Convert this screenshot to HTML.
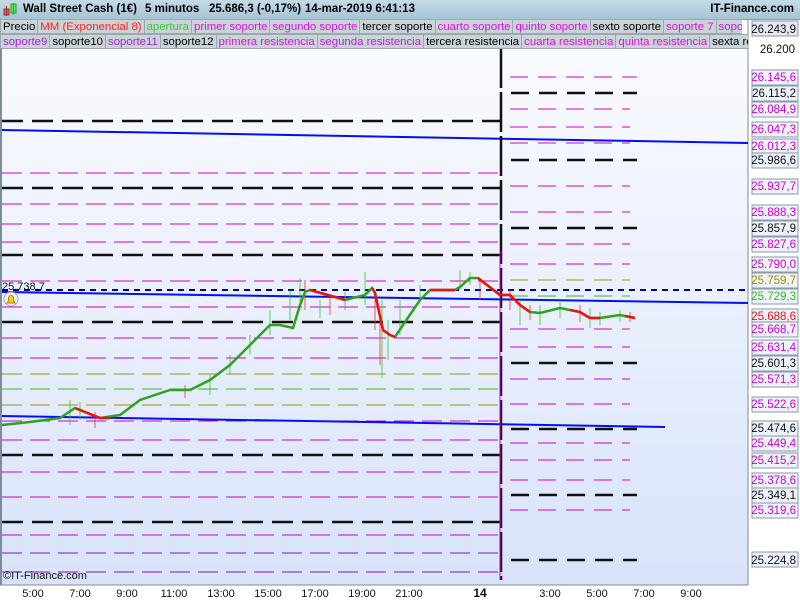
<!DOCTYPE html>
<html><head><meta charset="utf-8"><style>
body{margin:0;width:800px;height:600px;overflow:hidden;background:#fff;font-family:"Liberation Sans",sans-serif;}
.hdr{position:absolute;left:0;top:0;width:800px;height:19px;background:linear-gradient(#c4dbe6,#a5c4d4);border-bottom:1px solid #7f9aa8;font-weight:bold;font-size:11.5px;line-height:19px;}
.hdr span{position:absolute;white-space:nowrap}
.row{position:absolute;left:0;height:15px;font-size:11.4px;line-height:14px;white-space:nowrap;overflow:hidden;width:748px;z-index:2;}
.row span{display:inline-block;background:#c9d3d8;border:1px solid #9aa8b0;padding:0 2px;margin-right:-1px;height:13px;}
</style></head><body>
<div class="hdr"><span style="left:3px;top:3px;width:14px;height:14px">
<svg width="14" height="14"><rect x="1" y="6" width="5" height="6" fill="#e55" stroke="#933"/><rect x="8" y="1" width="5" height="9" fill="#5e5" stroke="#393"/><line x1="3.5" y1="3" x2="3.5" y2="13" stroke="#933"/><line x1="10.5" y1="0" x2="10.5" y2="12" stroke="#393"/></svg></span>
<span style="left:23px">Wall Street Cash (1€)</span><span style="left:145px">5 minutos</span><span style="left:209px">25.686,3 (-0,17%)</span><span style="left:305px">14-mar-2019 6:41:13</span>
<span style="right:6px">IT-Finance.com</span></div>
<div class="row" style="top:19px;width:742px"><span>Precio</span><span style="color:#f22">MM (Exponencial 8)</span><span style="color:#3c3">apertura</span><span style="color:#d1d">primer soporte</span><span style="color:#d1d">segundo soporte</span><span>tercer soporte</span><span style="color:#d1d">cuarto soporte</span><span style="color:#d1d">quinto soporte</span><span>sexto soporte</span><span style="color:#d1d">soporte 7</span><span style="color:#b2d">soporte 8</span></div>
<div class="row" style="top:34px"><span style="color:#a2d">soporte9</span><span>soporte10</span><span style="color:#a2d">soporte11</span><span>soporte12</span><span style="color:#d1d">primera resistencia</span><span style="color:#b2d">segunda resistencia</span><span>tercera resistencia</span><span style="color:#d1d">cuarta resistencia</span><span style="color:#d1d">quinta resistencia</span><span>sexta resistencia</span></div>
<svg width="800" height="580" style="position:absolute;left:0;top:20px" viewBox="0 20 800 580" font-family="Liberation Sans" font-size="11">
<defs><linearGradient id="bg" x1="0" y1="0" x2="0" y2="1"><stop offset="0" stop-color="#fbfcff"/><stop offset="1" stop-color="#d8e3fa"/></linearGradient></defs>
<rect x="0" y="20" width="748" height="565" fill="url(#bg)"/>
<line x1="1" y1="20" x2="1" y2="585" stroke="#7d8c99" stroke-width="2"/>
<line x1="748" y1="20" x2="748" y2="585" stroke="#7d8c99"/>
<line x1="0" y1="585" x2="748" y2="585" stroke="#7d8c99"/>
<g stroke-dasharray="21,9" stroke="#111" stroke-width="2.5">
<path d="M2 121H500M2 188H500M2 255H500M2 322H500M2 455H500M2 522H500"/>
</g>
<g stroke-dasharray="20,8" stroke="#d000d0" stroke-width="1">
<path d="M2 173H500M2 204H500M2 224H500M2 242H500M2 281H500M2 307H500M2 338H500M2 358H500M2 421H500M2 440H500M2 472H500M2 497H500M2 535H500"/>
</g>
<g stroke-dasharray="20,8" stroke-width="1">
<path d="M2 374H500M2 405H500" stroke="#999900"/><path d="M2 389H500" stroke="#33bb22"/><path d="M2 553H500M2 572H500" stroke="#8a10c0"/>
</g>
<g stroke-dasharray="18,10" stroke="#111" stroke-width="2.5" >
<path d="M511 93H637M511 160H637M511 228H637M511 363H637M511 429H637M511 495H637M511 560H637"/>
</g>
<g stroke-dasharray="18,10" stroke="#d000d0" stroke-width="1">
<path d="M510 77H637M510 109H630M510 127H630M510 143H630M510 186H630M510 212H630M510 244H630M510 264H630M510 329H630M510 347H630M510 379H630M510 404H630M510 443H630M510 460H630M510 480H630M510 510H630"/>
</g>
<path d="M510 280H630" stroke="#999900" stroke-dasharray="18,10"/>
<path d="M510 296H630" stroke="#33bb22" stroke-dasharray="18,10"/>
<path d="M2 290H748" stroke="#00008a" stroke-width="2" stroke-dasharray="6,5"/>
<path d="M2 130L748 143M2 292L748 303M2 416L665 427" stroke="#0010f0" stroke-width="2"/>
<path d="M501 48V580" stroke="#111" stroke-width="2.5" stroke-dasharray="40,4"/>
<path d="M500 250V580" stroke="#d000d0" stroke-width="1"/>
<g stroke-width="1" opacity="0.8">
<path d="M70 400V425M80 402V420M210 375V395M230 355V375M250 335V355M270 310V335M290 290V320M300 278V310M320 300V318M345 292V310M365 272V305M382 300V378M388 320V360M400 300V335M420 285V300M460 270V290M470 272V285M520 300V325M540 305V325M560 302V318M590 308V328M600 312V325M620 310V322" stroke="#33cc22"/>
<path d="M95 412V428M185 385V398M305 280V310M330 295V315M375 290V330M380 310V365M480 278V300M510 290V310M530 305V320M580 305V322M630 312V322" stroke="#ee3333"/>
</g>
<polyline fill="none" stroke="#2fa020" stroke-width="2.5" points="2,425 30,422 60,418 75,408 85,412 100,418 120,415 140,400 170,390 190,390 210,380 230,365 250,345 270,325 280,325 293,328 300,305 305,292 310,290 335,297 345,300 365,295 372,288 375,293 383,330 390,335 395,337 405,322 420,300 430,290 455,290 460,287 470,278 478,278 500,295 510,295 520,305 530,312 540,313 560,308 580,312 590,318 600,318 620,315 635,318"/>
<g fill="none" stroke="#ee1111" stroke-width="2.5">
<polyline points="75,408 85,412 100,418 110,418"/>
<polyline points="310,290 335,297 345,300"/>
<polyline points="372,288 375,293 383,330 390,335 395,337"/>
<polyline points="430,290 455,290"/>
<polyline points="478,278 500,295 510,295 520,305 530,312"/>
<polyline points="570,310 580,312 590,318 600,318"/>
<polyline points="625,316 635,318"/>
</g>
<text x="2" y="290" fill="#111">25.738,7</text>
<circle cx="11" cy="299" r="7" fill="#e8eef5" stroke="#aab"/>
<path d="M7 303h8l-1.5-2v-3a2.5 2.5 0 0 0-5 0v3z" fill="#f0d020" stroke="#a80"/>
<text x="3" y="579" fill="#111">©IT-Finance.com</text>
<g fill="#eef2fa" stroke="#8a9aa6">
<rect x="752" y="21" width="46" height="15" fill="#e4e8f2"/><rect x="752" y="70" width="46" height="15"/><rect x="752" y="86" width="46" height="15"/><rect x="752" y="102" width="46" height="15"/><rect x="752" y="122" width="46" height="15"/><rect x="752" y="139" width="46" height="15"/><rect x="752" y="153" width="46" height="15"/><rect x="752" y="179" width="46" height="15"/><rect x="752" y="205" width="46" height="15"/><rect x="752" y="221" width="46" height="15"/><rect x="752" y="237" width="46" height="15"/><rect x="752" y="257" width="46" height="15"/><rect x="752" y="273" width="46" height="15"/><rect x="752" y="289" width="46" height="15"/><rect x="752" y="309" width="46" height="15"/><rect x="752" y="322" width="46" height="15"/><rect x="752" y="340" width="46" height="15"/><rect x="752" y="356" width="46" height="15"/><rect x="752" y="372" width="46" height="15"/><rect x="752" y="397" width="46" height="15"/><rect x="752" y="421" width="46" height="15"/><rect x="752" y="436" width="46" height="15"/><rect x="752" y="453" width="46" height="15"/><rect x="752" y="473" width="46" height="15"/><rect x="752" y="488" width="46" height="15"/><rect x="752" y="503" width="46" height="15"/><rect x="752" y="552" width="46" height="15"/>
</g>
<g font-size="11.5" text-anchor="end">
<g fill="#111">
<text x="796" y="33">26.243,9</text><text x="795" y="53">26.200</text>
<text x="796" y="97">26.115,2</text><text x="796" y="164">25.986,6</text><text x="796" y="232">25.857,9</text>
<text x="796" y="367">25.601,3</text><text x="796" y="432">25.474,6</text><text x="796" y="499">25.349,1</text><text x="796" y="564">25.224,8</text>
</g>
<g fill="#d000d0">
<text x="796" y="81">26.145,6</text><text x="796" y="113">26.084,9</text><text x="796" y="133">26.047,3</text><text x="796" y="150">26.012,3</text>
<text x="796" y="190">25.937,7</text><text x="796" y="216">25.888,3</text><text x="796" y="248">25.827,6</text><text x="796" y="268">25.790,0</text>
<text x="796" y="333">25.668,7</text><text x="796" y="351">25.631,4</text><text x="796" y="383">25.571,3</text><text x="796" y="408">25.522,6</text>
<text x="796" y="447">25.449,4</text><text x="796" y="464">25.415,2</text><text x="796" y="484">25.378,6</text><text x="796" y="514">25.319,6</text>
</g>
<text x="796" y="284" fill="#a09000">25.759,7</text>
<text x="796" y="300" fill="#33bb22">25.729,3</text>
<text x="796" y="320" fill="#ee1111">25.688,6</text>
</g>
<g font-size="11" fill="#111" text-anchor="middle">
<text x="33" y="597">5:00</text><text x="80" y="597">7:00</text><text x="127" y="597">9:00</text><text x="174" y="597">11:00</text><text x="221" y="597">13:00</text><text x="268" y="597">15:00</text><text x="315" y="597">17:00</text><text x="362" y="597">19:00</text><text x="409" y="597">21:00</text><text x="480" y="597" font-weight="bold" font-size="12">14</text><text x="550" y="597">3:00</text><text x="597" y="597">5:00</text><text x="644" y="597">7:00</text><text x="691" y="597">9:00</text>
</g>
</svg>
</body></html>
